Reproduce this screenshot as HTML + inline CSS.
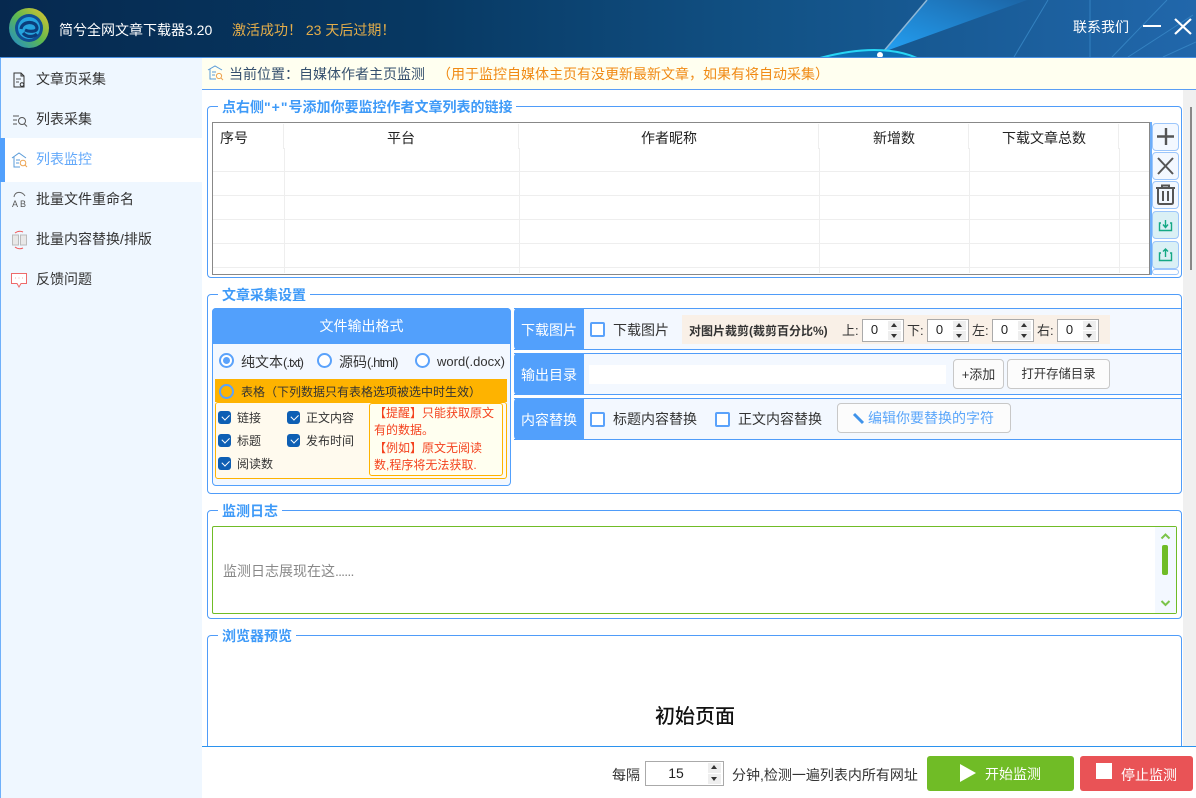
<!DOCTYPE html>
<html><head><meta charset="utf-8">
<style>
*{box-sizing:border-box;margin:0;padding:0}
html,body{width:1196px;height:798px;overflow:hidden;background:#fff}
body{position:relative;font-family:"Liberation Sans","Noto Sans CJK SC",sans-serif;font-size:14px;color:#333}
.a{position:absolute}
.t{position:absolute;white-space:nowrap;line-height:18px}
.fs{position:absolute;left:207px;width:975px;border:1px solid #4f9cf9;border-radius:4px}
.lg{position:absolute;left:10px;top:-9px;background:#fff;padding:0 4px;color:#3e9af8;font-weight:bold;font-size:14px;line-height:18px;white-space:nowrap}
.nav{position:absolute;left:36px;font-size:14px;color:#333;line-height:18px;white-space:nowrap}
.th{position:absolute;top:129px;color:#222;line-height:18px;white-space:nowrap;font-size:14px}
.vl{position:absolute;width:1px;background:#eee}
.hl{position:absolute;left:213px;width:936px;height:1px;background:#eee}
.sb{position:absolute;left:1152px;width:27px;border:1px solid #9cc6fb;border-radius:4px;background:#f3f8ff}
.rad{position:absolute;width:15px;height:15px;border:2px solid #5aa2fb;border-radius:50%;background:#fff}
.ck{position:absolute;width:13px;height:13px;background:#0e5fb4;border-radius:3px}
.ck:after{content:"";position:absolute;left:3.5px;top:2.5px;width:6px;height:3.5px;border-left:1px solid #fff;border-bottom:1px solid #fff;transform:rotate(-45deg)}
.cb{position:absolute;width:15px;height:15px;border:2px solid #5aa2fb;border-radius:2px;background:#fff}
.row{position:absolute;left:514px;width:668px;height:42px;border:1px solid #4f9cf9;border-left:0;background:#f3f8ff}
.lab{position:absolute;left:514px;width:70px;background:#52a0fc;color:#fff;text-align:center;font-size:14px;border-radius:4px 0 0 4px}
.spin{position:absolute;top:319px;width:42px;height:23px;border:1px solid #aaa;background:#fff;text-align:center;padding-right:17px;line-height:20px;color:#222;font-size:13px}
.spin i,.spin b{position:absolute;right:2px;width:13px;height:9px;background:#eee}
.spin i{top:1px}.spin b{bottom:1px}
.spin i:after{content:"";position:absolute;left:3px;top:2px;border:3.5px solid transparent;border-top:0;border-bottom:4px solid #333}
.spin b:after{content:"";position:absolute;left:3px;top:3px;border:3.5px solid transparent;border-bottom:0;border-top:4px solid #333}
.btn{position:absolute;background:#fcfcfc;border:1px solid #c8c8c8;border-radius:4px;text-align:center;color:#333}
</style></head><body>

<!-- header -->
<svg class="a" style="left:0;top:0" width="1196" height="58" viewBox="0 0 1196 58">
<defs>
<linearGradient id="h" x1="0" x2="1" y1="0" y2="0"><stop offset="0" stop-color="#06294f"/><stop offset=".35" stop-color="#073862"/><stop offset=".65" stop-color="#125286"/><stop offset="1" stop-color="#2167ab"/></linearGradient>
<linearGradient id="r" x1="0" x2="1" y1="1" y2="0"><stop offset="0" stop-color="#23a0f3"/><stop offset="1" stop-color="#1c65a6"/></linearGradient>
<linearGradient id="l1" x1="1" x2="0" y1="0" y2="1"><stop offset="0" stop-color="#eac52a"/><stop offset=".5" stop-color="#5eb94f"/><stop offset="1" stop-color="#1a86d8"/></linearGradient>
</defs>
<rect width="1196" height="58" fill="url(#h)"/>
<path d="M883 52L927 0H1027Z" fill="url(#r)"/>
<path d="M883 52L927 0" stroke="#8eb7d6" stroke-width="1.5"/>
<path d="M1014 57L1048 0M1090 0V57M1112 57L1167 0M1128 57L1193 15M1163 57L1196 42" stroke="#3a8ac8" stroke-width="1" fill="none" opacity=".8"/>
<path d="M820 58Q880 42 917 58" stroke="#27d6f5" stroke-width="2" fill="#0d6fb3"/>
<circle cx="880" cy="55" r="3" fill="#fff"/>
<circle cx="29" cy="28" r="20" fill="url(#l1)"/>
<circle cx="29" cy="28" r="14" fill="#0f4f94"/>
<circle cx="29" cy="28" r="11" fill="#25a3dd"/>
<path d="M21 29C22 21 36 20 37 28C37 32 29 32 25 30M23 33C27 38 34 37 37 34" stroke="#0b3d7b" stroke-width="3.2" fill="none"/>
<path d="M1143 26H1161" stroke="#fff" stroke-width="2"/>
<path d="M1175 19L1191 34M1191 19L1175 34" stroke="#fff" stroke-width="2.2"/>
</svg>
<div class="t" style="left:59px;top:21px;color:#fff;font-size:14px">简兮全网文章下载器3.20</div>
<div class="t" style="left:232px;top:21px;color:#e4ad4a;font-size:14px">激活成功！ 23 天后过期！</div>
<div class="t" style="left:1073px;top:18px;color:#fff;font-size:14px">联系我们</div>
<div class="a" style="left:0;top:57px;width:1196px;height:1px;background:#4a90e2"></div>

<!-- sidebar -->
<div class="a" style="left:0;top:58px;width:202px;height:740px;background:#eff7ff;border-left:1px solid #6fb0fa"></div>
<div class="a" style="left:0;top:138px;width:202px;height:44px;background:#fff;border-left:5px solid #52a0fc"></div>
<div class="nav" style="top:70px">文章页采集</div>
<div class="nav" style="top:110px">列表采集</div>
<div class="nav" style="top:150px;color:#62a8fa">列表监控</div>
<div class="nav" style="top:190px">批量文件重命名</div>
<div class="nav" style="top:230px">批量内容替换/排版</div>
<div class="nav" style="top:270px">反馈问题</div>
<svg class="a" style="left:10px;top:70px" width="20" height="220" viewBox="0 0 20 220" fill="none">
<path d="M4 3H11L14 6V17H4Z M11 3V6H14" stroke="#333"/><path d="M6 9H11M6 12H9" stroke="#555"/><circle cx="12" cy="14.5" r="1.8" stroke="#333"/>
<path d="M3 46H9M3 50H7M3 54H7" stroke="#555"/><circle cx="12" cy="51" r="3.5" stroke="#555"/><path d="M14.5 54L17 56.5" stroke="#555"/>
<path d="M2 88L9 83L16 88M4 87V97H10" stroke="#5a9bd8"/><path d="M6 90H10M6 93H9" stroke="#5a9bd8"/><circle cx="13" cy="93" r="2.8" stroke="#eda452"/><path d="M15 95L17 97" stroke="#eda452"/>
<path d="M4 127C5 121 12 121 15 126" stroke="#666"/><text x="2" y="137" font-size="9" fill="#555" font-family="Liberation Sans">A</text><text x="10" y="137" font-size="9" fill="#555" font-family="Liberation Sans">B</text>
<path d="M2.5 165H8.5V175H2.5ZM10.5 165H16.5V175H10.5Z" stroke="#bbb" fill="#e8e8e8"/><path d="M5 163Q9 160 13 162M5 177Q9 180 13 178" stroke="#ef5a5a"/>
<path d="M1.5 203.5H16.5V213.5H11L9 217L7 213.5H1.5Z" stroke="#ee6a6a" fill="#fff"/><path d="M5 208H6M8.5 208H9.5M12 208H13" stroke="#f2b0b0"/>
</svg>

<!-- breadcrumb -->
<div class="a" style="left:202px;top:58px;width:994px;height:32px;background:#fffff0;border-bottom:1px solid #5a9ef5"></div>
<svg class="a" style="left:207px;top:64px" width="18" height="18" viewBox="0 0 18 18" fill="none"><path d="M1 6L8 2L15 6M3 5V15H9" stroke="#5a9bd8"/><path d="M5 8H9M5 11H8" stroke="#5a9bd8"/><circle cx="12" cy="12" r="2.6" stroke="#eda452"/><path d="M14 14L16 16" stroke="#eda452"/></svg>
<div class="t" style="left:229px;top:65px;color:#35506e;font-size:14px">当前位置：自媒体作者主页监测</div>
<div class="t" style="left:437px;top:65px;color:#f08a14;font-size:14px">（用于监控自媒体主页有没更新最新文章，如果有将自动采集）</div>

<!-- scrollbar -->
<div class="a" style="left:1183px;top:90px;width:13px;height:656px;background:#f0f0f0"></div>
<div class="a" style="left:1190px;top:107px;width:2px;height:163px;background:#888"></div>

<!-- fieldset 1 -->
<div class="fs" style="top:106px;height:172px"><div class="lg">点右侧<span style="letter-spacing:1px">"+"</span>号添加你要监控作者文章列表的链接</div></div>
<div class="a" style="left:212px;top:122px;width:938px;height:153px;border:1px solid #888;background:#fff"></div>
<div class="th" style="left:220px">序号</div><div class="th" style="left:387px">平台</div><div class="th" style="left:641px">作者昵称</div><div class="th" style="left:873px">新增数</div><div class="th" style="left:1002px">下载文章总数</div>
<div class="vl" style="left:283px;top:124px;height:25px"></div><div class="vl" style="left:518px;top:124px;height:25px"></div><div class="vl" style="left:818px;top:124px;height:25px"></div><div class="vl" style="left:968px;top:124px;height:25px"></div><div class="vl" style="left:1118px;top:124px;height:25px"></div>
<div class="vl" style="left:284px;top:148px;height:125px"></div><div class="vl" style="left:519px;top:148px;height:125px"></div><div class="vl" style="left:819px;top:148px;height:125px"></div><div class="vl" style="left:969px;top:148px;height:125px"></div><div class="vl" style="left:1119px;top:148px;height:125px"></div>
<div class="hl" style="top:171px"></div><div class="hl" style="top:195px"></div><div class="hl" style="top:219px"></div><div class="hl" style="top:243px"></div><div class="hl" style="top:267px"></div>
<div class="a" style="left:1150px;top:122px;width:2px;height:153px;background:#6cadf9"></div>
<div class="sb" style="top:123px;height:28px"></div><div class="sb" style="top:152px;height:28px"></div><div class="sb" style="top:181px;height:28px"></div>
<div class="sb" style="top:211px;height:28px;background:#daf0f5"></div><div class="sb" style="top:241px;height:28px;background:#daf0f5"></div>
<div class="sb" style="top:269px;height:6px;background:#fff"></div>
<svg class="a" style="left:1152px;top:122px" width="28" height="150" viewBox="0 0 28 150" fill="none">
<path d="M14 6V23M5 14.5H22" stroke="#555" stroke-width="2.4"/>
<path d="M6 36L21 52M21 36L6 52" stroke="#555" stroke-width="2"/>
<path d="M4 66H23M10 66V63.5H17V66M6 66V80.5Q6 82 8 82H19Q21 82 21 80.5V66M11 69V79M16 69V79" stroke="#555" stroke-width="2"/>
<path d="M9 101H7.5V108.5H19.5V101H18M13.5 98V105M11 102.5L13.5 105.5L16 102.5" stroke="#14a884" stroke-width="1.4"/>
<path d="M9 131H7.5V138.5H19.5V131H18M13.5 127V135M11 129.5L13.5 127L16 129.5" stroke="#14a884" stroke-width="1.4"/>
</svg>

<!-- fieldset 2 -->
<div class="fs" style="top:294px;height:200px"><div class="lg">文章采集设置</div></div>
<div class="a" style="left:212px;top:308px;width:299px;height:178px;border:1px solid #52a0fc;border-radius:4px;background:#f3f8ff"></div>
<div class="a" style="left:212px;top:308px;width:299px;height:36px;background:#52a0fc;border-radius:4px 4px 0 0;color:#fff;text-align:center;line-height:37px;font-size:14px">文件输出格式</div>
<div class="rad" style="left:219px;top:353px"></div><div class="a" style="left:223px;top:357px;width:7px;height:7px;border-radius:50%;background:#5aa2fb"></div>
<div class="t" style="left:241px;top:353px;font-size:14px">纯文本<span style="font-size:13px;letter-spacing:-1px">(.txt)</span></div>
<div class="rad" style="left:317px;top:353px"></div><div class="t" style="left:339px;top:353px;font-size:14px">源码<span style="font-size:13px;letter-spacing:-.9px">(.html)</span></div>
<div class="rad" style="left:415px;top:353px"></div><div class="t" style="left:437px;top:353px;font-size:13px">word(.docx)</div>
<div class="a" style="left:215px;top:379px;width:292px;height:23px;background:#feb300"></div>
<div class="rad" style="left:219px;top:384px;background:#feb300"></div>
<div class="t" style="left:241px;top:383px;font-size:12px">表格（下列数据只有表格选项被选中时生效）</div>
<div class="a" style="left:215px;top:402px;width:292px;height:77px;background:#fffaee;border:1px solid #feb300;border-radius:3px"></div>
<div class="ck" style="left:218px;top:411px"></div><div class="t" style="left:237px;top:409px;font-size:12px">链接</div>
<div class="ck" style="left:287px;top:411px"></div><div class="t" style="left:306px;top:409px;font-size:12px">正文内容</div>
<div class="ck" style="left:218px;top:434px"></div><div class="t" style="left:237px;top:432px;font-size:12px">标题</div>
<div class="ck" style="left:287px;top:434px"></div><div class="t" style="left:306px;top:432px;font-size:12px">发布时间</div>
<div class="ck" style="left:218px;top:457px"></div><div class="t" style="left:237px;top:455px;font-size:12px">阅读数</div>
<div class="a" style="left:369px;top:403px;width:134px;height:73px;background:#fffff0;border:1px solid #feb300;border-radius:3px"></div>
<div class="t" style="left:374px;top:405px;font-size:12px;line-height:17.3px;color:#f4431f">【提醒】只能获取原文<br>有的数据。<br>【例如】原文无阅读<br>数,程序将无法获取.</div>

<!-- right rows -->
<div class="row" style="top:308px;height:42px"></div>
<div class="lab" style="top:308px;height:42px;line-height:44px">下载图片</div>
<div class="cb" style="left:590px;top:322px"></div><div class="t" style="left:613px;top:321px">下载图片</div>
<div class="a" style="left:682px;top:315px;width:428px;height:29px;background:#f9f0e7"></div>
<div class="t" style="left:689px;top:322px;font-weight:bold;font-size:12px">对图片裁剪(裁剪百分比%)</div>
<div class="t" style="left:842px;top:322px;font-size:13px">上:</div><div class="spin" style="left:862px">0<i></i><b></b></div>
<div class="t" style="left:907px;top:322px;font-size:13px">下:</div><div class="spin" style="left:927px">0<i></i><b></b></div>
<div class="t" style="left:972px;top:322px;font-size:13px">左:</div><div class="spin" style="left:992px">0<i></i><b></b></div>
<div class="t" style="left:1037px;top:322px;font-size:13px">右:</div><div class="spin" style="left:1057px">0<i></i><b></b></div>
<div class="row" style="top:353px;height:42px"></div>
<div class="lab" style="top:353px;height:42px;line-height:44px">输出目录</div>
<div class="a" style="left:589px;top:365px;width:357px;height:19px;background:#fff"></div>
<div class="btn" style="left:953px;top:359px;width:51px;height:30px;line-height:29px;font-size:13px">+添加</div>
<div class="btn" style="left:1007px;top:359px;width:103px;height:30px;line-height:29px;font-size:12.4px">打开存储目录</div>
<div class="row" style="top:398px;height:42px"></div>
<div class="lab" style="top:398px;height:42px;line-height:44px">内容替换</div>
<div class="cb" style="left:590px;top:412px"></div><div class="t" style="left:613px;top:410px">标题内容替换</div>
<div class="cb" style="left:715px;top:412px"></div><div class="t" style="left:738px;top:410px">正文内容替换</div>
<div class="btn" style="left:837px;top:403px;width:174px;height:30px;line-height:29px;color:#5ba6fa;padding-left:14px">编辑你要替换的字符</div>
<svg class="a" style="left:852px;top:412px" width="13" height="13" viewBox="0 0 13 13"><path d="M2 2L11 11" stroke="#3f93ea" stroke-width="3"/></svg>

<!-- fieldset 3 -->
<div class="fs" style="top:510px;height:109px"><div class="lg">监测日志</div></div>
<div class="a" style="left:212px;top:526px;width:965px;height:88px;border:1px solid #70bc26;border-radius:2px;background:#fff"></div>
<div class="a" style="left:1155px;top:527px;width:21px;height:86px;background:#f3f8ff"></div>
<div class="t" style="left:223px;top:562px;color:#888;font-size:14px">监测日志展现在这<span style="letter-spacing:-.8px">......</span></div>
<svg class="a" style="left:1160px;top:532px" width="14" height="76" viewBox="0 0 14 76" fill="none"><path d="M1.5 6.5L5.5 2.5L9.5 6.5M1.5 69L5.5 73L9.5 69" stroke="#7bc44a" stroke-width="2"/><rect x="2" y="13" width="6" height="30" rx="2" fill="#70bc26"/></svg>

<!-- fieldset 4 -->
<div class="fs" style="top:635px;height:125px"><div class="lg">浏览器预览</div></div>
<div class="t" style="left:655px;top:705px;font-size:20px;line-height:24px;color:#111;font-weight:500">初始页面</div>

<!-- bottom -->
<div class="a" style="left:202px;top:746px;width:994px;height:52px;background:#fff;border-top:1px solid #2b92ee"></div>
<div class="t" style="left:612px;top:766px">每隔</div>
<div class="a" style="left:645px;top:761px;width:79px;height:25px;border:1px solid #aaa;background:#fff;text-align:center;padding-right:17px;line-height:22px;color:#222;font-size:14px">15</div>
<div class="spin" style="left:705px;top:762px;width:18px;height:23px;border:0;background:transparent;padding:0"><i style="height:10px"></i><b style="height:10px"></b></div>
<div class="t" style="left:732px;top:766px">分钟,检测一遍列表内所有网址</div>
<div class="a" style="left:927px;top:756px;width:147px;height:35px;background:#70bc26;border-radius:3px"></div>
<svg class="a" style="left:958px;top:763px" width="20" height="22" viewBox="0 0 20 22"><path d="M2 1V19L18 10Z" fill="#fff"/></svg>
<div class="t" style="left:985px;top:765px;color:#fff;font-size:14px">开始监测</div>
<div class="a" style="left:1080px;top:756px;width:113px;height:35px;background:#e95356;border-radius:3px"></div>
<div class="a" style="left:1096px;top:763px;width:16px;height:16px;background:#fff"></div>
<div class="t" style="left:1121px;top:766px;color:#fff;font-size:14px">停止监测</div>
</body></html>
